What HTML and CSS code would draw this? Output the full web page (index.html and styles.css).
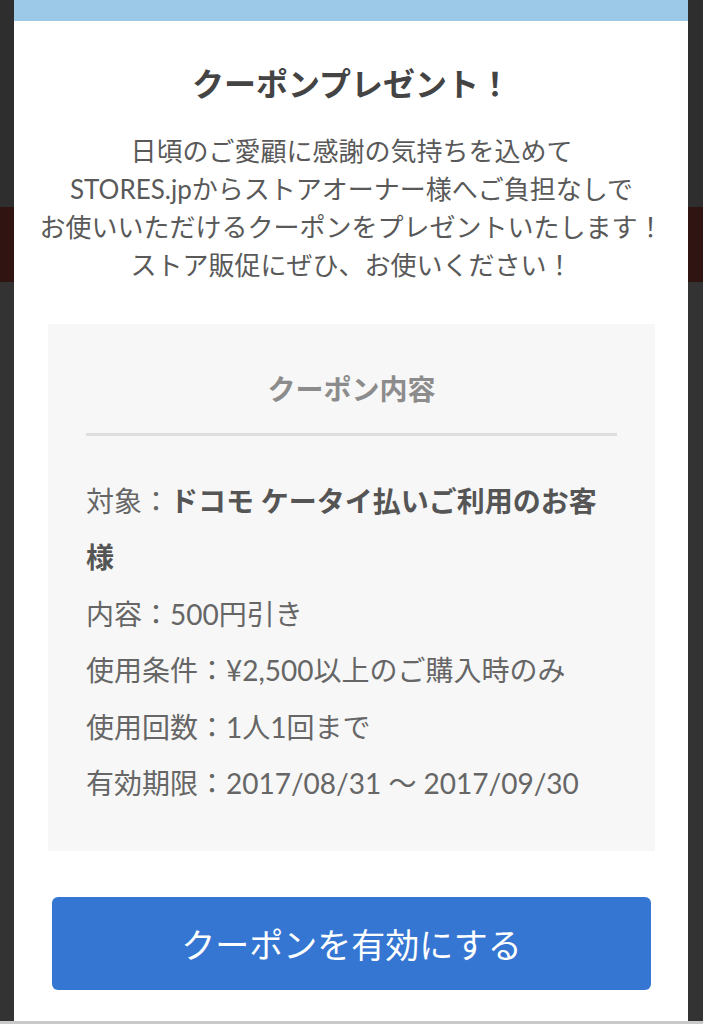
FILE: index.html
```html
<!DOCTYPE html>
<html lang="ja">
<head>
  <meta charset="UTF-8">
  <title>クーポンプレゼント</title>
  <link rel="stylesheet" href="styles.css">
</head>
<body>

  <div class="page">
    <div class="page-top"></div>
    <div class="page-band"></div>
    <div class="page-rest"></div>
  </div>

  <div class="overlay">
    <div class="modal">
      <div class="modal-bar"></div>
      <div class="modal-body">
        <h2 class="modal-title">クーポンプレゼント！</h2>
        <p class="lead">
          日頃のご愛顧に感謝の気持ちを込めて<br>
          STORES.jpからストアオーナー様へご負担なしで<br>
          お使いいただけるクーポンをプレゼントいたします！<br>
          ストア販促にぜひ、お使いください！
        </p>

        <div class="coupon">
          <h3 class="coupon-title">クーポン内容</h3>
          <ul class="coupon-list">
            <li><span class="label">対象：</span><strong>ドコモ ケータイ払いご利用のお客様</strong></li>
            <li>内容：500円引き</li>
            <li>使用条件：¥2,500以上のご購入時のみ</li>
            <li>使用回数：1人1回まで</li>
            <li>有効期限：2017/08/31 ～ 2017/09/30</li>
          </ul>
        </div>

        <button class="btn-activate">クーポンを有効にする</button>
      </div>
    </div>
    <div class="overlay-foot"></div>
  </div>

</body>
</html>
```

FILE: styles.css
```css
body {
  margin: 0;
  font-family: Lato, "Noto Sans CJK JP", sans-serif;
  background: #323232;
}

.page-top {
  height: 207px;
  background: #2e2e2e;
}

.page-band {
  height: 75px;
  background: #2f1412;
}

.page-rest {
  height: 742px;
  background: #333;
}

.overlay {
  position: fixed;
  top: 0;
  left: 0;
  right: 0;
  bottom: 0;
  display: flex;
  flex-direction: column;
}

.modal {
  margin: 0 15px 0 14px;
  height: 1021px;
  background: #fff;
  display: flex;
  flex-direction: column;
}

.modal-bar {
  height: 21px;
  background: #9dc9e9;
}

.modal-body {
  padding: 0 33px 0 34px;
  text-align: center;
}

.modal-title {
  margin: 40px 0 0;
  font-size: 32px;
  line-height: 46px;
  font-weight: 700;
  color: #444;
}

.lead {
  margin: 25px -30px 0;
  font-size: 26px;
  line-height: 38px;
  color: #595959;
}

.coupon {
  margin-top: 40px;
  padding: 45px 38px 40px;
  background: #f7f7f7;
  text-align: left;
}

.coupon-title {
  margin: 0;
  padding-bottom: 24px;
  border-bottom: 3px solid #dedede;
  font-size: 28px;
  line-height: 40px;
  font-weight: 700;
  color: #8c8c8c;
  text-align: center;
}

.coupon-list {
  list-style: none;
  margin: 37px 0 0;
  padding: 0;
  font-size: 28px;
  line-height: 56.4px;
  color: #666;
}

.coupon-list strong {
  color: #555;
}

.btn-activate {
  display: block;
  width: calc(100% - 8px);
  margin: 46px 4px 0;
  height: 93px;
  border: none;
  border-radius: 6px;
  background: #3476d2;
  color: #fff;
  font-family: Lato, "Noto Sans CJK JP", sans-serif;
  font-size: 34px;
  font-weight: 400;
}

.overlay-foot {
  height: 3px;
  background: #c9c9c9;
}
```
